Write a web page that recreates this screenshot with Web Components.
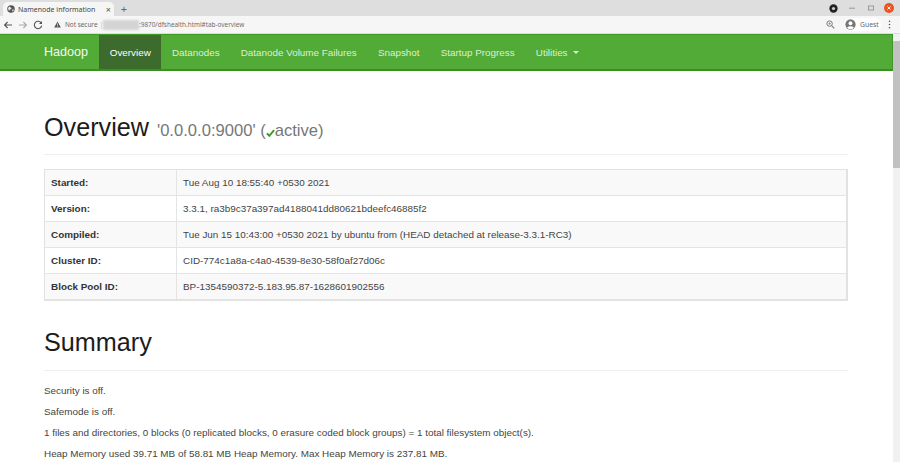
<!DOCTYPE html>
<html><head><meta charset="utf-8">
<style>
html,body{margin:0;padding:0;width:900px;height:462px;overflow:hidden;background:#fff;font-family:"Liberation Sans",Arial,sans-serif;}
</style></head><body>
<template id="t-chrome"><style>
:host{display:block;height:34px;font-family:"Noto Sans","Open Sans",sans-serif;color:#5f6368}
.strip{height:16px;background:#dedede;display:flex;align-items:flex-end;padding-left:3px;box-sizing:border-box}
.tab{width:111px;height:14px;background:#f6f6f6;border-radius:5px 5px 0 0;display:flex;align-items:center;box-sizing:border-box;padding:0 0 0 4px;font-size:7px;color:#444}
.tab span{flex:1;margin-left:3px;white-space:nowrap}
.tab b{font-weight:400;font-size:9px;margin-right:3px;color:#555;line-height:1}
.plus{margin-left:4px;font-size:11px;line-height:14px;color:#666;width:12px;text-align:center}
.sp{flex:1}
.wc{display:flex;align-items:center;height:16px;align-self:stretch}
.tool{height:18px;background:#f6f6f6;display:flex;align-items:center;padding-left:3px;box-sizing:border-box;font-size:6.4px;color:#666;border-bottom:1px solid #dcdcdc}
.tool svg{display:block;flex:none}
.ns{margin-left:4px;white-space:nowrap;color:#666}
.blur{width:36px;height:10px;background:#d4d4d4;margin-left:0;filter:blur(1px);flex:none}
.url{white-space:nowrap;color:#6f6f6f}
.guest{display:flex;align-items:center;background:#fff;border-radius:7px;height:13px;padding:0 4px 0 1px;margin-left:9px;color:#5f6368;font-size:6.8px;width:37px;box-sizing:border-box}
.guest span{margin-left:4px}
</style>
<div class="strip">
<div class="tab"><svg width="8" height="8" viewBox="0 0 16 16"><circle cx="8" cy="8" r="7.5" fill="#555"/><path d="M4 3l4 2 1 3-3 1-2 3-2-5zM11 9l3 0-2 4-2-1z" fill="#e8e8e8"/></svg><span>Namenode information</span><b>×</b></div>
<div class="plus">+</div><div class="sp"></div>
<div class="wc">
<svg width="9" height="9" viewBox="0 0 10 10" style="margin-right:10px"><circle cx="5" cy="5" r="4.6" fill="#222"/><circle cx="5" cy="5" r="1.8" fill="#ccc"/></svg>
<svg width="8" height="8" viewBox="0 0 8 8" style="margin-right:11px"><path d="M1 4.2h6" stroke="#999" stroke-width="1"/></svg>
<svg width="8" height="8" viewBox="0 0 8 8" style="margin-right:9px"><rect x="1.5" y="2" width="5" height="4" fill="none" stroke="#999" stroke-width="1"/></svg>
<svg width="10" height="10" viewBox="0 0 10 10" style="margin-right:6px"><circle cx="5" cy="5" r="5" fill="#e95420"/><path d="M3.4 3.4l3.2 3.2M6.6 3.4l-3.2 3.2" stroke="#fff" stroke-width=".9"/></svg>
</div>
</div>
<div class="tool">
<svg width="10" height="10" viewBox="0 0 10 10"><path d="M9 5H1.6M4.6 2L1.6 5l3 3" fill="none" stroke="#555" stroke-width="1.1"/></svg>
<svg width="10" height="10" viewBox="0 0 10 10" style="margin-left:5px"><path d="M1 5h7.4M5.4 2l3 3-3 3" fill="none" stroke="#aaa" stroke-width="1.1"/></svg>
<svg width="10" height="10" viewBox="0 0 10 10" style="margin-left:5px"><path d="M8.3 3.2A3.7 3.7 0 1 0 8.7 5.6" fill="none" stroke="#555" stroke-width="1.1"/><path d="M9 .9v3H6z" fill="#555"/></svg>
<svg width="7" height="7" viewBox="0 0 10 10" style="margin-left:11px"><path d="M5 .8L9.8 9.2H.2z" fill="#555"/><path d="M5 3.6v3M5 7.3v1" stroke="#f6f6f6" stroke-width="1"/></svg>
<span class="ns">Not secure</span><span style="margin-left:2px;color:#bbb">|</span><div class="blur"></div><span class="url">:9870/dfshealth.html#tab-overview</span>
<div class="sp"></div>
<svg width="9" height="9" viewBox="0 0 10 10"><circle cx="4" cy="4" r="3" fill="none" stroke="#777" stroke-width="1.1"/><path d="M6.3 6.3L9.2 9.2" stroke="#777" stroke-width="1.2"/><path d="M2.6 4h2.8M4 2.6v2.8" stroke="#777" stroke-width=".7"/></svg>
<div class="guest"><svg width="11" height="11" viewBox="0 0 12 12"><circle cx="6" cy="6" r="5.6" fill="#777"/><circle cx="6" cy="4.6" r="2.1" fill="#fff"/><path d="M2.3 9.6a4.2 3 0 0 1 7.4 0A5 5 0 0 1 2.3 9.6z" fill="#fff"/></svg><span>Guest</span></div>
<svg width="3" height="9" viewBox="0 0 3 9" style="margin-left:7px;margin-right:9px"><circle cx="1.5" cy="1.2" r=".8" fill="#555"/><circle cx="1.5" cy="4.5" r=".8" fill="#555"/><circle cx="1.5" cy="7.8" r=".8" fill="#555"/></svg>
</div></template>

<template id="t-nav"><style>
:host{display:flex;height:37px;background:#52ab37;border-top:1px solid #3f9a27;border-bottom:2px solid #399021;box-sizing:border-box;padding-left:44px;font-size:9.85px;color:#ddeed6;align-items:stretch;white-space:nowrap;box-shadow:inset -1px 0 0 #3f9a27}
.brand{font-size:12.6px;color:#f2f8ef;display:flex;align-items:center;margin-right:11px}
</style><div class="brand"><slot name="brand"></slot></div><slot></slot></template>

<template id="t-link"><style>
:host{display:flex;align-items:center;padding:0 10.6px}
:host([active]){background:#3d6b2e;color:#fff}
.c[hidden]{display:none}
.c{display:inline-block;width:0;height:0;border-left:3px solid transparent;border-right:3px solid transparent;border-top:3px solid #ddeed6;margin-left:5px}
</style><slot></slot><span class="c" hidden></span></template>

<template id="t-heading"><style>
:host{display:block;border-bottom:1px solid #eee;color:#222;white-space:nowrap}
h1{margin:0;font-weight:400;font-size:25.2px;line-height:31px;color:#1c1c1c}
</style><h1><slot></slot></h1></template>

<template id="t-table"><style>
:host{display:block;border:1px solid #e2e2e2;border-width:1px 2px 2px 1px}
</style><slot></slot></template>

<template id="t-row"><style>
:host{display:grid;grid-template-columns:132px 1fr;height:26px;box-sizing:border-box;border-top:1px solid #e4e4e4;font-size:9.9px;line-height:25px;color:#333;background:#fff}
:host([odd]){background:#f9f9f9}
:host(:first-child){border-top:0;height:25px}
.k{font-weight:700;padding-left:6px;border-right:1px solid #e4e4e4}
.v{padding-left:6px;color:#444}
</style><div class="k"><slot name="k"></slot></div><div class="v"><slot></slot></div></template>

<template id="t-page"><style>
:host{display:grid;grid-template-columns:1fr 7px;height:428px;overflow:hidden}
.left{min-width:0;overflow:hidden}
.main{padding:0 45px 0 44px}
.bar{background:#f1f1f1;display:flex;flex-direction:column;align-items:stretch}
.up{height:7px;flex:none}.th{height:127px;background:#c1c1c1;flex:none}
</style><div class="left"><slot name="nav"></slot><div class="main"><slot></slot></div></div><div class="bar"><div class="up"></div><div class="th"></div></div></template>

<nav-top></nav-top>
<page-body>
<hadoop-nav slot="nav">
<span slot="brand">Hadoop</span>
<nav-link active>Overview</nav-link><nav-link>Datanodes</nav-link><nav-link>Datanode Volume Failures</nav-link><nav-link>Snapshot</nav-link><nav-link>Startup Progress</nav-link><nav-link caret>Utilities</nav-link>
</hadoop-nav>
<page-heading style="margin-top:41px;padding-bottom:8px"><span>Overview</span> <small style="font-size:16.6px;color:#777;margin-left:1px">'0.0.0.0:9000' (<svg width="9" height="8" viewBox="0 0 11 10" style="vertical-align:-1px"><path d="M1 5.5l3 3 6-7" fill="none" stroke="#3c9a20" stroke-width="2.4"/></svg>active)</small></page-heading>
<info-table style="margin-top:14px">
<info-row odd><span slot="k">Started:</span>Tue Aug 10 18:55:40 +0530 2021</info-row>
<info-row><span slot="k">Version:</span>3.3.1, ra3b9c37a397ad4188041dd80621bdeefc46885f2</info-row>
<info-row odd><span slot="k">Compiled:</span>Tue Jun 15 10:43:00 +0530 2021 by ubuntu from (HEAD detached at release-3.3.1-RC3)</info-row>
<info-row><span slot="k">Cluster ID:</span>CID-774c1a8a-c4a0-4539-8e30-58f0af27d06c</info-row>
<info-row odd><span slot="k">Block Pool ID:</span>BP-1354590372-5.183.95.87-1628601902556</info-row>
</info-table>
<page-heading style="margin-top:26px;padding-bottom:12px">Summary</page-heading>
<text-line style="margin-top:9px">Security is off.</text-line>
<text-line>Safemode is off.</text-line>
<text-line>1 files and directories, 0 blocks (0 replicated blocks, 0 erasure coded block groups) = 1 total filesystem object(s).</text-line>
<text-line>Heap Memory used 39.71 MB of 58.81 MB Heap Memory. Max Heap Memory is 237.81 MB.</text-line>
</page-body>
<script>
function def(name, tid, init){
  customElements.define(name, class extends HTMLElement{
    constructor(){super();this.attachShadow({mode:'open'}).appendChild(document.getElementById(tid).content.cloneNode(true));}
    connectedCallback(){ if(init) init(this); }
  });
}
def('nav-top','t-chrome');
def('hadoop-nav','t-nav');
def('nav-link','t-link',function(el){ if(el.hasAttribute('caret')) el.shadowRoot.querySelector('.c').hidden=false; });
def('page-heading','t-heading');
def('info-table','t-table');
def('info-row','t-row');
def('page-body','t-page');
customElements.define('text-line', class extends HTMLElement{
  constructor(){super();this.attachShadow({mode:'open'}).innerHTML='<style>:host{display:block;font-size:9.9px;line-height:21px;color:#444;white-space:nowrap}</style><slot></slot>';}
});
</script>
</body></html>
